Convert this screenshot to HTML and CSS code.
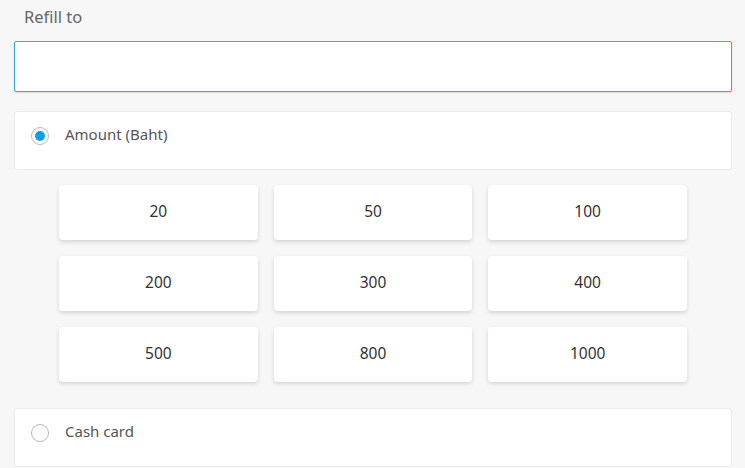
FILE: index.html
```html
<!DOCTYPE html>
<html>
<head>
<meta charset="utf-8">
<link rel="stylesheet" href="styles.css">
</head>
<body>
<div class="page">
  <div class="label">Refill to</div>
  <div class="input"></div>
  <div class="option">
    <span class="radio checked"></span>
    <span class="option-text">Amount (Baht)</span>
  </div>
  <div class="grid">
    <div class="btn">20</div>
    <div class="btn">50</div>
    <div class="btn">100</div>
    <div class="btn">200</div>
    <div class="btn">300</div>
    <div class="btn">400</div>
    <div class="btn">500</div>
    <div class="btn">800</div>
    <div class="btn">1000</div>
  </div>
  <div class="option last">
    <span class="radio"></span>
    <span class="option-text">Cash card</span>
  </div>
</div>
</body>
</html>
```

FILE: styles.css
```css
html, body {
  margin: 0;
  padding: 0;
  background: #f7f7f7;
  font-family: "Noto Sans", "DejaVu Sans", sans-serif;
}
.page {
  padding: 4px 13px 0 14px;
  display: flex;
  flex-direction: column;
}
.label {
  font-size: 16.5px;
  color: #666;
  padding-left: 10px;
  height: 26px;
  line-height: 26px;
  margin-bottom: 11px;
}
.input {
  height: 49px;
  background: #fff;
  border: 1px solid #35aed6;
  border-radius: 2px;
  box-shadow: 0 1px 2px rgba(0,0,0,0.12);
}
.option {
  margin-top: 19px;
  height: 57px;
  box-sizing: content-box;
  background: #fff;
  border: 1px solid #ebebeb;
  border-radius: 3px;
  display: flex;
  align-items: flex-start;
  padding-left: 16px;
}
.option.last {
  margin-top: 26px;
}
.radio {
  width: 18px;
  height: 18px;
  border: 1px solid #b8b8b8;
  border-radius: 50%;
  box-sizing: border-box;
  position: relative;
  margin-right: 16px;
  margin-top: 15px;
  flex: none;
}
.radio.checked::after {
  content: "";
  position: absolute;
  left: 3px;
  top: 3px;
  width: 10px;
  height: 10px;
  border-radius: 50%;
  background: #0fa0e3;
}
.option-text {
  font-size: 15px;
  line-height: 20px;
  margin-top: 12px;
  color: #555;
}
.grid {
  margin: 15px 45px 0 45px;
  display: grid;
  grid-template-columns: repeat(3, 1fr);
  column-gap: 16px;
  row-gap: 16px;
}
.btn {
  height: 55px;
  background: #fff;
  border-radius: 4px;
  box-shadow: 0 2px 4px rgba(0,0,0,0.14);
  display: flex;
  align-items: center;
  justify-content: center;
  font-size: 15.5px;
  color: #333;
  padding-bottom: 4px;
  box-sizing: border-box;
}
```
